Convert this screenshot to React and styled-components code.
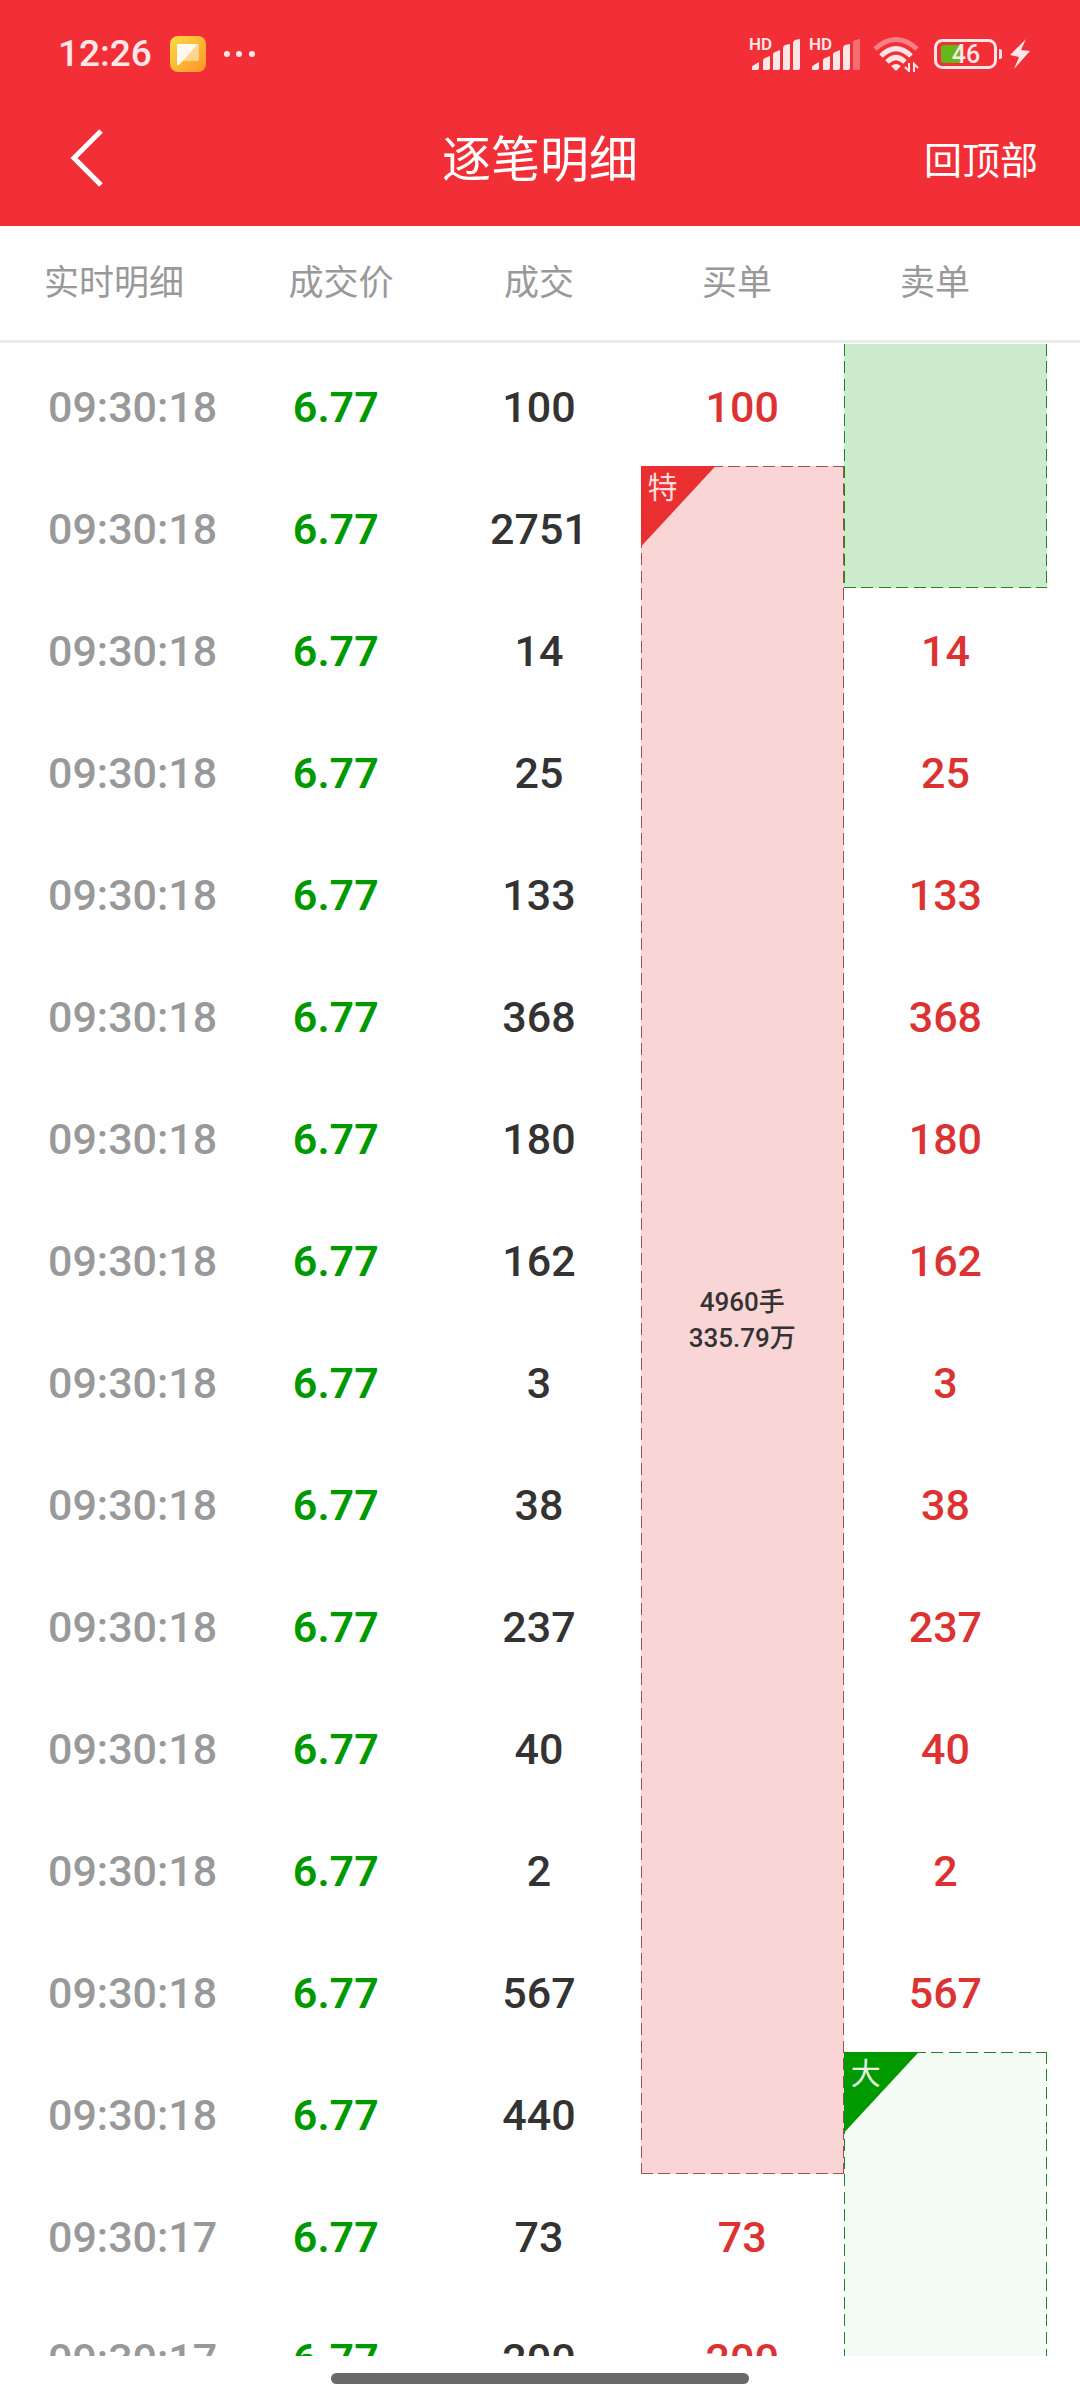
import React from 'react'
import styled, { createGlobalStyle } from 'styled-components'

const trades = [
    { time: '09:30:18', volume: '100', buy: { text: '100' }, sell: { span: 2, tone: 'green', open: 'top' } },
    { time: '09:30:18', volume: '2751', buy: { span: 14, tone: 'red', tag: '特', lots: '4960手', amount: '335.79万' } },
    { time: '09:30:18', volume: '14', sell: { text: '14' } },
    { time: '09:30:18', volume: '25', sell: { text: '25' } },
    { time: '09:30:18', volume: '133', sell: { text: '133' } },
    { time: '09:30:18', volume: '368', sell: { text: '368' } },
    { time: '09:30:18', volume: '180', sell: { text: '180' } },
    { time: '09:30:18', volume: '162', sell: { text: '162' } },
    { time: '09:30:18', volume: '3', sell: { text: '3' } },
    { time: '09:30:18', volume: '38', sell: { text: '38' } },
    { time: '09:30:18', volume: '237', sell: { text: '237' } },
    { time: '09:30:18', volume: '40', sell: { text: '40' } },
    { time: '09:30:18', volume: '2', sell: { text: '2' } },
    { time: '09:30:18', volume: '567', sell: { text: '567' } },
    { time: '09:30:18', volume: '440', sell: { span: 3, tone: 'pale', tag: '大', open: 'bottom' } },
    { time: '09:30:17', volume: '73', buy: { text: '73' } },
    { time: '09:30:17', volume: '200', buy: { text: '200' } },
]

const tones = {
    red: { fill: '#fad5d5', line: '#a84c4c', tag: '#ea2f31', tagText: '#fcd9da' },
    green: { fill: '#cceacc', line: '#1c871c', tag: '#009900', tagText: '#e6f5e6' },
    pale: { fill: '#f5fcf5', line: '#1c871c', tag: '#009900', tagText: '#e6f5e6' },
}

function Signal({ weak }) {
    return (
        <SignalStyled>
            <span>HD</span>
            <svg width="50" height="34" viewBox="0 0 50 34" fill="#fde6e7" aria-hidden="true">
                <path d="M2 33v-3q0-1 2-2l5-3v6q0 2-2 2z" />
                <path d="M13 33V23q0-1 2-2l5-2v12q0 2-2 2z" />
                <path d="M23 33V17q0-1 2-2l5-2v18q0 2-2 2z" />
                <path d="M33 33V11q0-2 2-3l5-1v24q0 2-2 2z" />
                <path d="M43 33V6q0-2 2-3l5-1v29q0 2-2 2z" opacity={weak ? 0.35 : 1} />
            </svg>
        </SignalStyled>
    )
}

function OrderCell({ order }) {
    if (!order) return null
    if (!order.span) return <Cell $color="#dc3232">{order.text}</Cell>

    const tone = tones[order.tone]
    return (
        <BlockCell rowSpan={order.span} $span={order.span} $tone={tone} $open={order.open}>
            {order.tag && <Tag $tone={tone}>{order.tag}</Tag>}
            {order.lots && <Summary>{order.lots}<br />{order.amount}</Summary>}
        </BlockCell>
    )
}

function App() {
    return (
        <Page>
            <GlobalStyle />
            <Top>
                <StatusBar>
                    <Clock>12:26</Clock>
                    <svg width="36" height="36" viewBox="0 0 36 36" aria-hidden="true">
                        <defs>
                            <linearGradient id="note" x1="0" y1="0" x2="1" y2="1">
                                <stop offset="0" stopColor="#fbdc45" />
                                <stop offset="1" stopColor="#ff9326" />
                            </linearGradient>
                        </defs>
                        <rect width="36" height="36" rx="8" fill="url(#note)" />
                        <path d="M8 8h20q1 0 1 1v15q0 1-1 1H13z" fill="#fff" opacity="0.45" />
                        <path d="M8 8h20L9 29q-2 1-2-1V9q0-1 1-1z" fill="#fffaf0" />
                    </svg>
                    <svg width="32" height="8" viewBox="0 0 32 8" fill="#fde6e7" aria-hidden="true">
                        <circle cx="3" cy="4" r="3" />
                        <circle cx="15" cy="4" r="3" />
                        <circle cx="28" cy="4" r="3" />
                    </svg>
                    <StatusIcons>
                        <Signal />
                        <Signal weak />
                        <svg width="54" height="36" viewBox="-4 0 54 36" fill="none" stroke="#fde6e7" strokeWidth="5" aria-hidden="true">
                            <path d="M3 13Q24-6 45 13" opacity="0.45" />
                            <path d="M9 20Q24 5 39 20" />
                            <path d="M15 26Q24 17 33 26" />
                            <path d="M19 30q5-4 10 0l-4 4q-1 1-2 0z" fill="#fde6e7" stroke="none" />
                            <path d="M37 27v8l-4-4M42 36v-8l4 4" strokeWidth="2" />
                        </svg>
                        <Battery>
                            <svg width="72" height="32" viewBox="0 0 72 32" aria-hidden="true">
                                <rect x="5.5" y="2.5" width="60" height="27" rx="7" fill="none" stroke="#fde6e7" strokeWidth="3" />
                                <path d="M14 7h19v18H14q-3 0-3-3V10q0-3 3-3z" fill="#65b81b" />
                                <path d="M69 11q3 0 3 2v6q0 2-3 2z" fill="#fde6e7" />
                            </svg>
                            <span>46</span>
                        </Battery>
                        <svg width="20" height="30" viewBox="0 0 20 30" fill="#fde6e7" aria-hidden="true">
                            <path d="M16 0L0 16l9 2-5 12 16-18-9-1z" />
                        </svg>
                    </StatusIcons>
                </StatusBar>
                <TitleBar>
                    <BackButton type="button" aria-label="返回">
                        <svg width="36" height="60" viewBox="0 0 36 60" fill="none" stroke="#fff" strokeWidth="5" aria-hidden="true">
                            <path d="M33 3L6 30l27 27" />
                        </svg>
                    </BackButton>
                    <h1>逐笔明细</h1>
                    <TopButton type="button">回顶部</TopButton>
                </TitleBar>
            </Top>
            <List>
                <thead>
                    <tr>
                        <th>实时明细</th>
                        <th>成交价</th>
                        <th>成交</th>
                        <th>买单</th>
                        <th>卖单</th>
                    </tr>
                </thead>
                <tbody>
                    {trades.map(({ time, volume, buy, sell }, index) => (
                        <tr key={index}>
                            <Cell $color="#999999">{time}</Cell>
                            <Cell $color="#009900" $weight={600}>6.77</Cell>
                            <Cell $color="#333333">{volume}</Cell>
                            <OrderCell order={buy} />
                            <OrderCell order={sell} />
                        </tr>
                    ))}
                </tbody>
            </List>
            <HomeArea><HomeBar /></HomeArea>
        </Page>
    )
}

const GlobalStyle = createGlobalStyle`
    * {
        box-sizing: border-box;
    }

    body {
        margin: 0;
        background: #fefefe;
        font-family: Roboto, 'Noto Sans CJK SC', sans-serif;
    }

    svg {
        display: block;
        flex: none;
    }
`;

const Page = styled.div`
    display: flex;
    flex-direction: column;
    height: 100vh;
    overflow: hidden;
`;

const Top = styled.header`
    flex: none;
    background: #f22f37;
    color: #fff;
`;

const StatusBar = styled.div`
    display: flex;
    align-items: center;
    height: 96px;
    padding: 12px 50px 0 58px;
    gap: 18px;
`;

const Clock = styled.span`
    font-size: 37px;
    line-height: 40px;
    font-weight: 500;
    color: #fde6e7;
`;

const StatusIcons = styled.div`
    display: flex;
    align-items: center;
    gap: 8px;
    margin-left: auto;
`;

const SignalStyled = styled.div`
    position: relative;
    padding-left: 2px;

    span {
        position: absolute;
        top: 0;
        left: 1px;
        font-size: 17px;
        line-height: 14px;
        font-weight: 600;
        color: #fde6e7;
    }
`;

const Battery = styled.div`
    position: relative;

    span {
        position: absolute;
        inset: 0;
        font-size: 25px;
        line-height: 34px;
        font-weight: 500;
        text-align: center;
        color: #fde6e7;
    }
`;

const TitleBar = styled.div`
    display: grid;
    grid-template-columns: 1fr auto 1fr;
    align-items: center;
    height: 130px;
    padding: 0 42px;

    h1 {
        margin: 0;
        font-size: 49px;
        line-height: 62px;
        font-weight: 400;
    }
`;

const BackButton = styled.button`
    justify-self: start;
    padding: 0 26px 6px;
    border: 0;
    background: none;
`;

const TopButton = styled.button`
    justify-self: end;
    padding: 0;
    border: 0;
    background: none;
    color: #fff;
    font-family: inherit;
    font-size: 38px;
    line-height: 60px;
`;

const List = styled.table`
    display: block;
    flex: 1;
    min-height: 0;
    overflow: hidden;

    thead {
        display: block;
        border-bottom: 3px solid #ececec;
    }

    thead tr {
        display: grid;
        grid-template-columns: repeat(5, 1fr);
        padding: 0 46px 0 44px;
    }

    th {
        padding: 2px 0 0;
        font-size: 35px;
        line-height: 112px;
        font-weight: 400;
        color: #999;
    }

    th:first-child {
        text-align: left;
    }

    tbody {
        display: grid;
        grid-template-columns: repeat(5, 1fr);
        grid-auto-rows: 122px;
        padding: 1px 33px 0 31px;
    }

    tbody tr {
        display: contents;
    }
`;

const Cell = styled.td`
    display: flex;
    align-items: center;
    justify-content: center;
    padding: 4px 0 0;
    font-size: 43px;
    line-height: 52px;
    font-weight: ${({ $weight = 500 }) => $weight};
    color: ${({ $color }) => $color};
`;

const dash = (direction, color) => `repeating-linear-gradient(${direction},
    ${color} 0 12px, transparent 12px 17px, ${color} 17px 29px, transparent 29px 35px)`

const BlockCell = styled.td`
    position: relative;
    display: flex;
    align-items: center;
    justify-content: center;
    grid-row: span ${({ $span }) => $span};
    padding: 0;
    background-color: ${({ $tone }) => $tone.fill};
    background-image:
        ${({ $tone }) => dash('to bottom', $tone.line)},
        ${({ $tone }) => dash('to bottom', $tone.line)},
        ${({ $tone }) => dash('to right', $tone.line)},
        ${({ $tone }) => dash('to right', $tone.line)};
    background-repeat: no-repeat;
    background-position: left top, right top, left top, left bottom;
    background-size:
        1px 100%,
        1px 100%,
        100% ${({ $open }) => $open === 'top' ? '0' : '1px'},
        100% ${({ $open }) => $open === 'bottom' ? '0' : '1px'};
`;

const Tag = styled.span`
    position: absolute;
    top: 0;
    left: 0;
    width: 75px;
    height: 81px;
    padding-left: 7px;
    background: ${({ $tone }) => $tone.tag};
    clip-path: polygon(0 0, 100% 0, 0 100%);
    font-size: 30px;
    line-height: 44px;
    color: ${({ $tone }) => $tone.tagText};
`;

const Summary = styled.span`
    font-size: 26px;
    line-height: 36px;
    font-weight: 500;
    text-align: center;
    color: #333;
`;

const HomeArea = styled.footer`
    display: flex;
    flex: none;
    justify-content: center;
    height: 44px;
    padding-top: 17px;
`;

const HomeBar = styled.div`
    width: 418px;
    height: 11px;
    border-radius: 6px;
    background: #696969;
`;

export default App
